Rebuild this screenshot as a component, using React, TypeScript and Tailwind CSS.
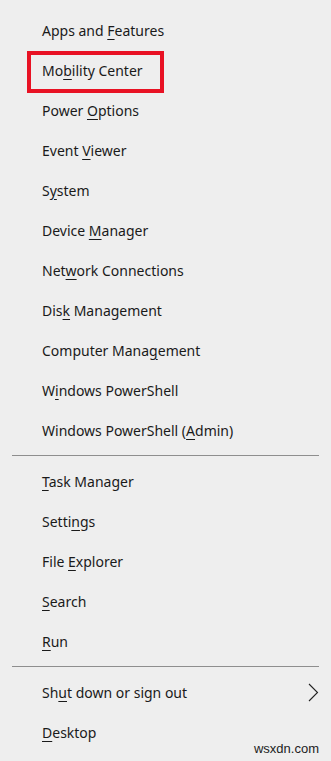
import React from "react";

type Item = { before: string; key: string; after: string; sub?: boolean; boxed?: boolean };

const groups: Item[][] = [
  [
    { before: "Apps and ", key: "F", after: "eatures" },
    { before: "Mo", key: "b", after: "ility Center", boxed: true },
    { before: "Power ", key: "O", after: "ptions" },
    { before: "Event ", key: "V", after: "iewer" },
    { before: "S", key: "y", after: "stem" },
    { before: "Device ", key: "M", after: "anager" },
    { before: "Net", key: "w", after: "ork Connections" },
    { before: "Dis", key: "k", after: " Management" },
    { before: "Computer Mana", key: "g", after: "ement" },
    { before: "W", key: "i", after: "ndows PowerShell" },
    { before: "Windows PowerShell (", key: "A", after: "dmin)" },
  ],
  [
    { before: "", key: "T", after: "ask Manager" },
    { before: "Setti", key: "n", after: "gs" },
    { before: "File ", key: "E", after: "xplorer" },
    { before: "", key: "S", after: "earch" },
    { before: "", key: "R", after: "un" },
  ],
  [
    { before: "Sh", key: "u", after: "t down or sign out", sub: true },
    { before: "", key: "D", after: "esktop" },
  ],
];

function Row({ item }: { item: Item }) {
  return (
    <div className="relative flex h-[40px] items-center pl-[42px] pr-[12px]">
      <span>
        {item.before}
        <span className="underline underline-offset-[3px]">{item.key}</span>
        {item.after}
      </span>
      {item.boxed && (
        <div className="absolute left-[27px] top-[1px] h-[42px] w-[137px] border-[4px] border-[#e81123]" />
      )}
      {item.sub && (
        <svg className="ml-auto" width="11" height="19" viewBox="0 0 11 19">
          <path d="M1 1 L9.5 9.5 L1 18" fill="none" stroke="#222" strokeWidth="1.1" />
        </svg>
      )}
    </div>
  );
}

export default function App() {
  return (
    <div
      className="relative h-[761px] w-[331px] overflow-hidden bg-[#eeeeee] pt-[10px] text-[14px] text-[#1a1a1a]"
      style={{ fontFamily: '"Noto Sans", "Open Sans", sans-serif' }}
    >
      {groups.map((g, gi) => (
        <div key={gi}>
          {gi > 0 && <div className="mx-[12px] mb-[5px] mt-[5px] h-px bg-[#8e8e8e]" />}
          {g.map((item) => (
            <Row key={item.before + item.key + item.after} item={item} />
          ))}
        </div>
      ))}
      <div
        className="absolute bottom-[3px] right-[12px] text-[13px] text-[#222]"
        style={{ fontFamily: '"Liberation Sans", Arial, sans-serif' }}
      >
        wsxdn.com
      </div>
    </div>
  );
}
